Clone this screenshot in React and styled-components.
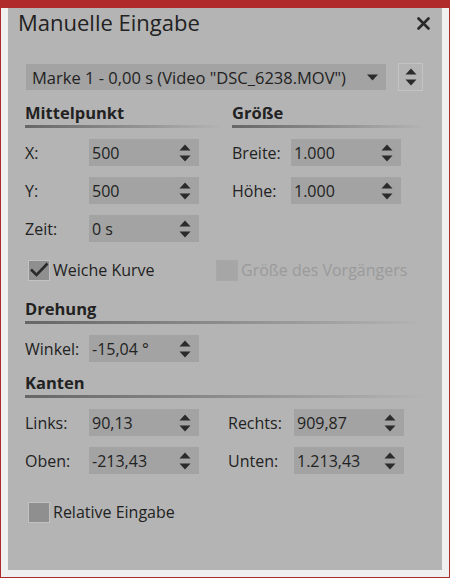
import React from 'react'
import styled, { createGlobalStyle } from 'styled-components'

const GlobalStyle = createGlobalStyle`
  html, body {
    margin: 0;
    padding: 0;
  }
  body {
    font-family: "Open Sans", "Noto Sans", sans-serif;
    color: #222;
  }
`

const Window = styled.div`
  display: flex;
  width: 450px;
  height: 578px;
  box-sizing: border-box;
  background: #f0f0f0;
  border: 1px solid #b0292b;
  border-top: 8px solid #b0292b;
  padding: 0 7px 7px 7px;
`

const Panel = styled.section`
  flex: 1;
  background: #b4b4b4;
  padding: 0 17px;
  display: flex;
  flex-direction: column;
`

const TitleBar = styled.header`
  display: flex;
  align-items: center;
  justify-content: space-between;
  height: 30px;
  margin: -1px -5px 0 -7px;
`

const Title = styled.h1`
  margin: 0;
  font-size: 22px;
  font-weight: 400;
  color: #222;
`

const CloseButton = styled.span`
  display: flex;
  margin-top: 2px;
  cursor: pointer;
`

const PickerRow = styled.div`
  display: flex;
  align-items: center;
  gap: 12px;
  margin-top: 26px;
  margin-left: 1px;
`

const Dropdown = styled.div`
  display: flex;
  align-items: center;
  justify-content: space-between;
  width: 360px;
  height: 26px;
  box-sizing: border-box;
  padding: 0 8px 0 6px;
  background: #a3a3a3;
  font-size: 16.5px;
`

const SpinButton = styled.div`
  display: flex;
  align-items: center;
  justify-content: center;
  width: 25px;
  height: 28px;
  box-sizing: border-box;
  border: 1px solid #c4c4c4;
`

const Columns = styled.div`
  display: grid;
  grid-template-columns: ${p => p.$cols || '207px 1fr'};
  row-gap: 11px;
  margin-top: ${p => p.$top || 0}px;
`

const Section = styled.div`
  display: flex;
  flex-direction: column;
  gap: 11px;
  margin-top: ${p => p.$top || 0}px;
`

const SectionTitle = styled.h2`
  margin: 0;
  font-size: 16.5px;
  font-weight: 700;
  line-height: 20px;
  color: #222;
  &::after {
    content: '';
    display: block;
    height: 3px;
    margin-top: 2px;
    width: ${p => p.$line || 200}px;
    background: linear-gradient(to right, #666, rgba(180, 180, 180, 0));
  }
`

const Row = styled.div`
  display: flex;
  align-items: center;
  height: 27px;
`

const Label = styled.span`
  width: ${p => p.$w || 64}px;
  font-size: 16px;
`

const Field = styled.div`
  display: flex;
  align-items: center;
  justify-content: space-between;
  width: 110px;
  height: 27px;
  box-sizing: border-box;
  padding: 0 8px 0 3px;
  background: #a3a3a3;
  font-size: 16px;
`

const CheckRow = styled.div`
  display: flex;
  align-items: center;
  height: 22px;
  margin-top: ${p => p.$top || 0}px;
`

const Check = styled.label`
  display: flex;
  align-items: center;
  gap: 3px;
  margin-left: 3px;
  width: ${p => (p.$w ? `${p.$w}px` : 'auto')};
  font-size: 16px;
  color: ${p => (p.$disabled ? '#9a9a9a' : '#222')};
`

const Box = styled.span`
  width: 22px;
  height: 21px;
  box-sizing: border-box;
  border: 1px solid ${p => (p.$disabled ? '#a8a8a8' : '#c2c2c2')};
  background: ${p => (p.$disabled ? '#a6a6a6' : '#8f8f8f')};
  display: flex;
  align-items: center;
  justify-content: center;
`

const Spinner = () => (
  <svg width="12" height="18" viewBox="0 0 12 18">
    <path d="M0.5 6.5 L6 0.5 L11.5 6.5 Z" fill="#2b2b2b" />
    <path d="M0.5 11.5 L11.5 11.5 L6 17.5 Z" fill="#2b2b2b" />
  </svg>
)

const Caret = () => (
  <svg width="11" height="7" viewBox="0 0 11 7">
    <path d="M0 0.5 L11 0.5 L5.5 6.5 Z" fill="#2b2b2b" />
  </svg>
)

const CloseIcon = () => (
  <svg width="13" height="13" viewBox="0 0 13 13">
    <path d="M1.5 1.5 L11.5 11.5 M11.5 1.5 L1.5 11.5" stroke="#2a2a2a" strokeWidth="2.6" strokeLinecap="round" />
  </svg>
)

const Tick = () => (
  <svg width="20" height="16" viewBox="0 0 20 16">
    <path d="M2 7.5 L7.5 13 L18.5 1.5" fill="none" stroke="#2a2a2a" strokeWidth="2.6" />
  </svg>
)

const FieldRow = ({ label, value, w }) => (
  <Row>
    <Label $w={w}>{label}</Label>
    <Field>
      <span>{value}</span>
      <Spinner />
    </Field>
  </Row>
)

export default function App() {
  return (
    <>
      <GlobalStyle />
      <Window>
        <Panel>
          <TitleBar>
            <Title>Manuelle Eingabe</Title>
            <CloseButton>
              <CloseIcon />
            </CloseButton>
          </TitleBar>

          <PickerRow>
            <Dropdown>
              <span>Marke 1 - 0,00 s (Video "DSC_6238.MOV")</span>
              <Caret />
            </Dropdown>
            <SpinButton>
              <Spinner />
            </SpinButton>
          </PickerRow>

          <Columns $top={12}>
            <Section>
              <SectionTitle $line={198}>Mittelpunkt</SectionTitle>
              <FieldRow label="X:" value="500" />
              <FieldRow label="Y:" value="500" />
              <FieldRow label="Zeit:" value="0 s" />
            </Section>
            <Section>
              <SectionTitle $line={193}>Größe</SectionTitle>
              <FieldRow label="Breite:" value="1.000" w={59} />
              <FieldRow label="Höhe:" value="1.000" w={59} />
            </Section>
          </Columns>

          <CheckRow $top={17}>
            <Check $w={185}>
              <Box>
                <Tick />
              </Box>
              Weiche Kurve
            </Check>
            <Check $disabled>
              <Box $disabled />
              Größe des Vorgängers
            </Check>
          </CheckRow>

          <Section $top={18}>
            <SectionTitle $line={400}>Drehung</SectionTitle>
            <FieldRow label="Winkel:" value="-15,04 °" />
          </Section>

          <Section $top={11}>
            <SectionTitle $line={400}>Kanten</SectionTitle>
            <Columns $cols="203px 1fr">
              <FieldRow label="Links:" value="90,13" />
              <FieldRow label="Rechts:" value="909,87" w={66} />
              <FieldRow label="Oben:" value="-213,43" />
              <FieldRow label="Unten:" value="1.213,43" w={66} />
            </Columns>
          </Section>

          <CheckRow $top={27}>
            <Check>
              <Box />
              Relative Eingabe
            </Check>
          </CheckRow>
        </Panel>
      </Window>
    </>
  )
}
